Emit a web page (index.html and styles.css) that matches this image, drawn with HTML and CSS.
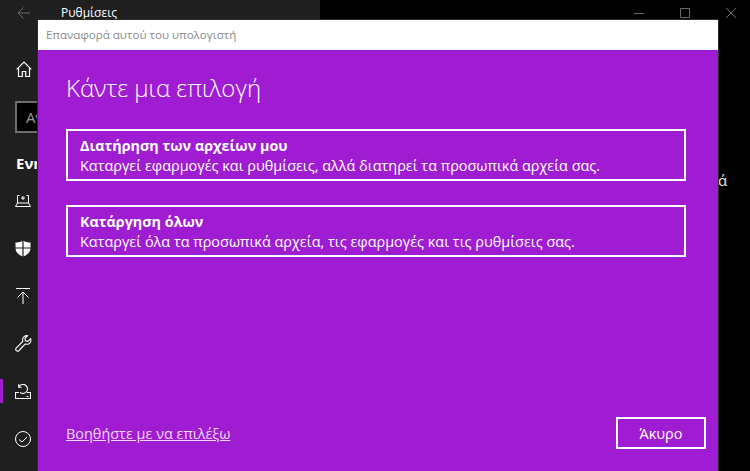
FILE: index.html
```html
<!DOCTYPE html>
<html lang="el">
<head>
<meta charset="utf-8">
<title>Ρυθμίσεις</title>
<link rel="stylesheet" href="styles.css">
</head>
<body>
<div class="settings">
  <aside class="sidebar">
    <div class="topbar">
      <svg class="back" width="13" height="12" viewBox="0 0 13 12"><path d="M13 6H1M6.500 .5 1 6l5.500 5.500" fill="none" stroke="#6a6a6a" stroke-width="1"/></svg>
      <span class="app-title">Ρυθμίσεις</span>
    </div>
    <div class="home">
      <svg width="16" height="16" viewBox="0 0 16 16"><path d="M.7 8.300 8 1l7.300 7.300M2.500 6.500v9h3.800v-5h3.400v5h3.800v-9" fill="none" stroke="#fff" stroke-width="1.200"/></svg>
    </div>
    <div class="search"><span>Αν</span></div>
    <div class="section">Ενη</div>
    <nav class="nav">
      <div class="nav-item">
        <svg width="16" height="12" viewBox="0 0 16 12"><path d="M2.500 8V.5M13.500 8V.5M2.500 .5h2M11.500 .5h2M.5 11.500h15L13.500 8h-11zM8 1v4M6 3h4" fill="none" stroke="#fff" stroke-width="1"/></svg>
      </div>
      <div class="nav-item">
        <svg width="16" height="17" viewBox="0 0 16 17"><path d="M8 0.500C6 2 3 2.500 .5 2.500V8c0 4 3 7 7.500 8.500C12.500 15 15.500 12 15.500 8V2.500C13 2.500 10 2 8 .5z" fill="#fff"/><path d="M8 0v17M0 8h16" stroke="#1f1f1f" stroke-width="1.200"/></svg>
      </div>
      <div class="nav-item">
        <svg width="14" height="16" viewBox="0 0 14 16"><path d="M0 .5h14M7 16V4M1.500 9.500 7 4l5.500 5.500" fill="none" stroke="#fff" stroke-width="1"/></svg>
      </div>
      <div class="nav-item">
        <svg width="17" height="17" viewBox="0 0 17 17"><path d="M12.500 .8 10 3.300l.3 2.500 2.500.5 2.800-2.700c.8 2-.1 4.500-2.100 5.300-1.200.5-2.300.4-3.200 0l-6.300 6.600c-.8.800-2 .8-2.700.1-.8-.8-.7-2 .1-2.800l6.300-6.300C7.300 4 8 2 9.500 1.200c1-.6 2-.7 3-.4z" fill="none" stroke="#fff" stroke-width="1.100"/></svg>
      </div>
      <div class="nav-item active">
        <svg width="16" height="15" viewBox="0 0 16 15"><path d="M4.200 2.500A4.500 4.500 0 1 1 5 8.300M3.700 .2v3h3M4 8.500H.5v6h15v-6H12M11.500 12.500h2" fill="none" stroke="#fff" stroke-width="1.100"/></svg>
      </div>
      <div class="nav-item">
        <svg width="16" height="16" viewBox="0 0 16 16"><circle cx="8" cy="8" r="7.500" fill="none" stroke="#fff" stroke-width="1"/><path d="m4 8.500 3 2.500 5-5" fill="none" stroke="#fff" stroke-width="1"/></svg>
      </div>
    </nav>
  </aside>
  <main class="content">
    <div class="controls">
      <svg width="12" height="12" viewBox="0 0 12 12"><path d="M1 6.500h10" stroke="#6b6b6b"/></svg>
      <svg width="12" height="12" viewBox="0 0 12 12"><path d="M1.500 1.500h9v9h-9z" fill="none" stroke="#6b6b6b"/></svg>
      <svg width="12" height="12" viewBox="0 0 12 12"><path d="m1 1 10 10M11 1 1 11" stroke="#6b6b6b"/></svg>
    </div>
    <span class="peek">ά</span>
  </main>
</div>

<section class="dialog">
  <header class="dialog-title">Επαναφορά αυτού του υπολογιστή</header>
  <div class="dialog-body">
    <h1 class="heading">Κάντε μια επιλογή</h1>
    <div class="options">
      <div class="option">
        <strong class="option-name">Διατήρηση των αρχείων μου</strong>
        <span class="option-text">Καταργεί εφαρμογές και ρυθμίσεις, αλλά διατηρεί τα προσωπικά αρχεία σας.</span>
      </div>
      <div class="option">
        <strong class="option-name">Κατάργηση όλων</strong>
        <span class="option-text">Καταργεί όλα τα προσωπικά αρχεία, τις εφαρμογές και τις ρυθμίσεις σας.</span>
      </div>
    </div>
    <footer class="dialog-footer">
      <a class="help" href="#">Βοηθήστε με να επιλέξω</a>
      <button class="cancel" type="button">Άκυρο</button>
    </footer>
  </div>
</section>
</body>
</html>
```

FILE: styles.css
```css
* { box-sizing: border-box; }
html, body { margin: 0; height: 100%; overflow: hidden; }
body {
  background: #000;
  color: #fff;
  font-family: "Open Sans", "Noto Sans", sans-serif;
}
.settings { display: flex; height: 471px; }
.sidebar { width: 320px; background: #1f1f1f; display: flex; flex-direction: column; flex: none; }
.topbar { display: flex; align-items: center; height: 26px; padding: 0 0 0 17px; }
.back { flex: none; margin-right: 31px; }
.app-title { font-size: 12px; line-height: 28px; }
.home { height: 58px; padding: 35px 0 0 16px; line-height: 0; }
.search {
  width: 300px; height: 32px; margin: 17px 0 0 15px;
  background: #000; border: 2px solid #6e6e6e;
  font-size: 15px; color: #9a9a9a; padding-left: 9px; line-height: 28px;
}
.section { font-size: 15px; font-weight: 700; margin: 20px 0 0 16px; line-height: 20px; height: 20px; }
.nav { display: flex; flex-direction: column; margin-top: 4px; }
.nav-item { height: 47.600px; display: flex; align-items: center; justify-content: center; width: 46px; flex: none; position: relative; }
.active::before { content: ""; position: absolute; left: 0; top: 12px; width: 3px; height: 24px; background: #a01cd2; }
.content { flex: 1; position: relative; }
.controls { display: flex; gap: 34px; justify-content: flex-end; padding: 7px 13px 0 0; }
.peek { position: absolute; left: 398px; top: 170px; font-size: 15px; color: #e6e6e6; }
.dialog { position: absolute; left: 38px; top: 20px; width: 680px; height: 451px; display: flex; flex-direction: column; box-shadow: 1px 0 0 0 #2b2b2b, 0 -1px 0 0 #2b2b2b, -1px 0 0 0 #2b2b2b; }
.dialog-title { height: 30px; background: #fff; color: #8a8a8a; font-size: 11.600px; line-height: 30px; padding-left: 8px; flex: none; }
.dialog-body { flex: 1; background: #a01cd2; padding: 20px 12px 22px 28px; display: flex; flex-direction: column; }
.heading { margin: 0; font-size: 24px; font-weight: 300; line-height: 36px; }
.options { display: flex; flex-direction: column; gap: 24px; margin-top: 23px; width: 620px; }
.option { height: 52px; border: 2px solid #fff; padding: 6px 12px 0; display: flex; flex-direction: column; }
.option-name { font-size: 14.350px; font-weight: 700; line-height: 18px; }
.option-text { font-size: 14.450px; line-height: 21px; white-space: nowrap; }
.dialog-footer { margin-top: auto; display: flex; justify-content: space-between; align-items: center; }
.help { color: #f0d8f8; font-size: 14.450px; text-decoration: underline; }
.cancel { width: 90px; height: 32px; background: transparent; border: 2px solid #fff; color: #fff; font: inherit; font-size: 14.450px; padding: 0; }
```
